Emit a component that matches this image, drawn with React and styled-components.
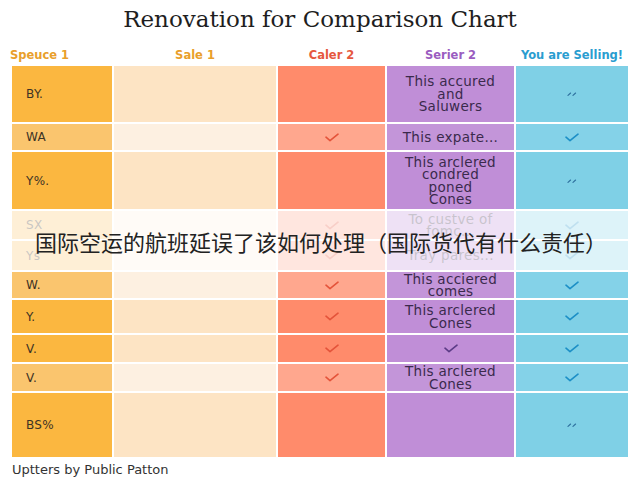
import styled, { createGlobalStyle } from "styled-components";

const GlobalStyle = createGlobalStyle`
  html, body {
    margin: 0;
    padding: 0;
    background: #ffffff;
  }
  body {
    font-family: "DejaVu Sans", "Noto Sans", sans-serif;
  }
`;

const palette = {
  spec: { base: "#fbb740", light: "#fac56e" },
  sale: { base: "#fde4c4", light: "#fdf0e1" },
  caler: { base: "#ff8b6b", light: "#ffa78e" },
  serier: { base: "#c08ed7", light: "#c395d9" },
  you: { base: "#7fd0e6", light: "#84d2e8" },
};

const columns = [
  { key: "spec", label: "Speuce 1", color: "#e99f2c", align: "left" },
  { key: "sale", label: "Sale 1", color: "#e99f2c", align: "center" },
  { key: "caler", label: "Caler 2", color: "#e6583e", align: "center" },
  { key: "serier", label: "Serier 2", color: "#9a5cc0", align: "center" },
  { key: "you", label: "You are Selling!", color: "#2a9dd0", align: "center" },
];

const rows = [
  { h: 56, name: "BY.", caler: null, serier: ["This accured", "and", "Saluwers"], you: "dash" },
  { h: 26, name: "WA", light: true, caler: "check", serier: ["This expate..."], you: "check" },
  { h: 57, name: "Y%.", caler: null, serier: ["This arclered", "condred", "poned", "Cones"], you: "dash" },
];

const shrouded = [
  { h: 28, name: "SX", light: true, caler: "check", serier: ["To custve of", "fomc..."], you: "check" },
  { h: 29, name: "Ys", light: true, caler: "check", serier: ["Tray pares..."], you: "check" },
];

const lower = [
  { h: 26, name: "W.", light: true, caler: "check", serier: ["This acciered", "comes"], you: "check" },
  { h: 33, name: "Y.", caler: "check", serier: ["This arclered", "Cones"], you: "check" },
  { h: 27, name: "V.", caler: "check", serier: "check", you: "check" },
  { h: 27, name: "V.", light: true, caler: "check", serier: ["This arclered", "Cones"], you: "check" },
  { h: 64, name: "BS%", caler: null, serier: null, you: "dash" },
];

function Check({ color }) {
  return (
    <svg width="14" height="9" viewBox="0 0 14 9">
      <path d="M1 4.2 L5 7.6 L13 1.2" fill="none" stroke={color} strokeWidth="1.6" strokeLinecap="round" strokeLinejoin="round" />
    </svg>
  );
}

function Dashes() {
  return (
    <svg width="10" height="4" viewBox="0 0 10 4">
      <path d="M1 3.4 L3.6 1 M6 3.4 L8.6 1" fill="none" stroke="#2d6f9e" strokeWidth="1.1" strokeLinecap="round" />
    </svg>
  );
}

function Mark({ kind, color }) {
  if (kind === "check") return <Check color={color} />;
  if (kind === "dash") return <Dashes />;
  if (Array.isArray(kind)) {
    return (
      <Lines>
        {kind.map((l, i) => (
          <div key={i}>{l}</div>
        ))}
      </Lines>
    );
  }
  return null;
}

function Row({ row }) {
  return (
    <RowGrid style={{ height: row.h }}>
      <Cell $col="spec" $light={row.light} $align="left">
        <Name>{row.name}</Name>
      </Cell>
      <Cell $col="sale" $light={row.light} />
      <Cell $col="caler" $light={row.light}>
        <Mark kind={row.caler} color="#e4533a" />
      </Cell>
      <Cell $col="serier" $light={row.light}>
        <Mark kind={row.serier} color="#5b3b86" />
      </Cell>
      <Cell $col="you" $light={row.light}>
        <Mark kind={row.you} color="#1c8fc6" />
      </Cell>
    </RowGrid>
  );
}

export default function App() {
  return (
    <Page>
      <GlobalStyle />
      <Title>Renovation for Comparison Chart</Title>
      <HeaderGrid>
        {columns.map((c) => (
          <HeaderLabel key={c.key} $color={c.color} $align={c.align}>
            {c.label}
          </HeaderLabel>
        ))}
      </HeaderGrid>
      <Table>
        {rows.map((r, i) => (
          <Row key={"a" + i} row={r} />
        ))}
        <Shroud>
          {shrouded.map((r, i) => (
            <Row key={"b" + i} row={r} />
          ))}
          <Veil>国际空运的航班延误了该如何处理（国际货代有什么责任）</Veil>
        </Shroud>
        {lower.map((r, i) => (
          <Row key={"c" + i} row={r} />
        ))}
      </Table>
      <Footer>Uptters by Public Patton</Footer>
    </Page>
  );
}

const gridCols = "100px 162px 107px 127px 112px";

const Page = styled.div`
  width: 640px;
  height: 480px;
  padding: 0 12px;
  box-sizing: border-box;
  overflow: hidden;
`;

const Title = styled.h1`
  margin: 0;
  height: 38px;
  line-height: 38px;
  text-align: center;
  font-family: "DejaVu Serif", "Liberation Serif", serif;
  font-weight: normal;
  font-size: 23px;
  color: #1e1e1e;
`;

const HeaderGrid = styled.div`
  display: grid;
  grid-template-columns: ${gridCols};
  column-gap: 2px;
  margin-top: 8px;
  height: 18px;
  margin-bottom: 2px;
`;

const HeaderLabel = styled.div`
  font-size: 11.5px;
  font-weight: bold;
  line-height: 18px;
  color: ${(p) => p.$color};
  text-align: ${(p) => p.$align};
  white-space: nowrap;
  margin-left: ${(p) => (p.$align === "left" ? "-2px" : "0")};
`;

const Table = styled.div`
  display: flex;
  flex-direction: column;
  gap: 2px;
`;

const RowGrid = styled.div`
  display: grid;
  grid-template-columns: ${gridCols};
  column-gap: 2px;
`;

const Cell = styled.div`
  display: flex;
  align-items: center;
  justify-content: ${(p) => (p.$align === "left" ? "flex-start" : "center")};
  background: ${(p) => (p.$light ? palette[p.$col].light : palette[p.$col].base)};
  min-height: 0;
`;

const Name = styled.span`
  padding-left: 14px;
  font-size: 12px;
  color: #3d3325;
  letter-spacing: 0.3px;
`;

const Lines = styled.div`
  text-align: center;
  font-size: 13.5px;
  line-height: 12.5px;
  letter-spacing: 0.3px;
  color: #3a2a4c;
  white-space: nowrap;
`;

const Shroud = styled.div`
  position: relative;
  display: flex;
  flex-direction: column;
  gap: 2px;
`;

const Veil = styled.div`
  position: absolute;
  top: -1px;
  bottom: -2px;
  left: 0;
  right: 0;
  display: flex;
  align-items: center;
  padding-left: 23px;
  background: rgba(255, 255, 255, 0.72);
  font-family: "Noto Sans CJK SC", "Noto Sans", sans-serif;
  font-size: 22px;
  color: #222222;
  white-space: nowrap;
`;

const Footer = styled.div`
  margin-top: 5px;
  line-height: 16px;
  font-size: 13px;
  color: #333333;
`;
